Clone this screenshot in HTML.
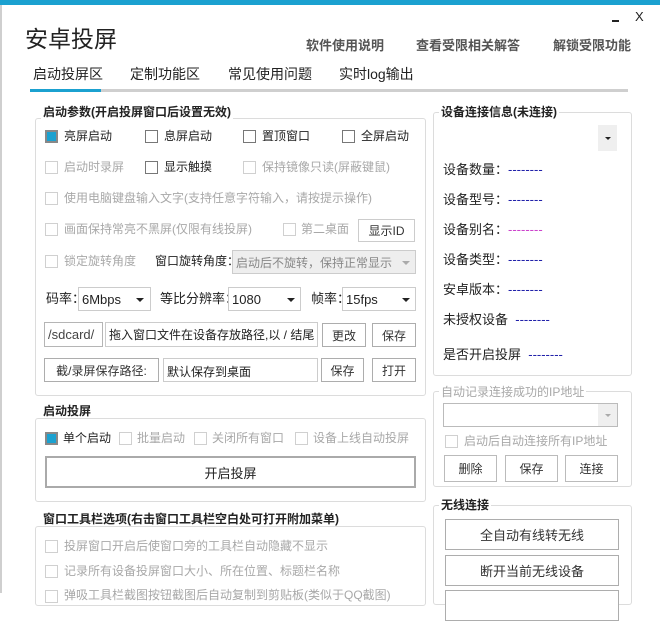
<!DOCTYPE html><html><head><meta charset="utf-8"><style>
*{margin:0;padding:0;box-sizing:border-box}
body{width:660px;height:593px;overflow:hidden;background:#fff;font-family:"Liberation Sans","Noto Sans CJK SC",sans-serif;font-size:12px;color:#222;position:relative}
.a{position:absolute;white-space:nowrap;line-height:1}
.g{position:absolute;border:1px solid #dcdcdc;border-radius:3px}
.gt{position:absolute;background:#fff;font-weight:bold;padding:0 2px;line-height:14px;font-size:12px}
.cb{position:absolute;width:13px;height:13px;border:1px solid #777;background:#fff}
.cb.d{border-color:#d0d0d0}
.cb.on{background:#1ba1d0;border:2px solid #888;}
.dis{color:#a8a8a8}
.btn{position:absolute;border:1px solid #adadad;background:#fff;display:flex;align-items:center;justify-content:center;font-size:12px;color:#333}
.inp{position:absolute;border:1px solid #b5b5b5;background:#fff;display:flex;align-items:center;padding-left:3px;font-size:12px}
.arr{position:absolute;width:0;height:0;border-left:4px solid transparent;border-right:4px solid transparent;border-top:4px solid #222}
.lab{position:absolute;font-size:13px;line-height:1;white-space:nowrap}
</style></head><body>
<div style="position:absolute;left:0;top:0;width:660px;height:5px;background:#1ba1d0"></div>
<div style="position:absolute;left:0;top:5px;width:2px;height:588px;background:#cfcfcf"></div>
<div class="a" style="left:25px;top:28px;font-size:23px;color:#222">安卓投屏</div>
<div class="a" style="left:306px;top:39px;font-size:13px;color:#555;font-weight:bold">软件使用说明</div>
<div class="a" style="left:416px;top:39px;font-size:13px;color:#555;font-weight:bold">查看受限相关解答</div>
<div class="a" style="left:553px;top:39px;font-size:13px;color:#555;font-weight:bold">解锁受限功能</div>
<div style="position:absolute;left:612px;top:20px;width:7px;height:2px;background:#222"></div>
<div class="a" style="left:635px;top:10px;font-size:13px">X</div>
<div class="a" style="left:33px;top:67px;font-size:14px">启动投屏区</div>
<div class="a" style="left:130px;top:67px;font-size:14px">定制功能区</div>
<div class="a" style="left:228px;top:67px;font-size:14px">常见使用问题</div>
<div class="a" style="left:339px;top:67px;font-size:14px">实时log输出</div>
<div style="position:absolute;left:30px;top:89px;width:598px;height:3px;background:#cfcfcf"></div>
<div style="position:absolute;left:30px;top:89px;width:71px;height:3px;background:#1ba1d0"></div>

<!-- group1 -->
<div class="g" style="left:35px;top:118px;width:391px;height:278px"></div>
<div class="gt" style="left:41px;top:105px">启动参数(开启投屏窗口后设置无效)</div>
<div class="cb on" style="left:45px;top:130px"></div><div class="a" style="left:64px;top:130px">亮屏启动</div>
<div class="cb" style="left:145px;top:130px"></div><div class="a" style="left:164px;top:130px">息屏启动</div>
<div class="cb" style="left:243px;top:130px"></div><div class="a" style="left:262px;top:130px">置顶窗口</div>
<div class="cb" style="left:342px;top:130px"></div><div class="a" style="left:361px;top:130px">全屏启动</div>
<div class="cb d" style="left:45px;top:161px"></div><div class="a dis" style="left:64px;top:161px">启动时录屏</div>
<div class="cb" style="left:145px;top:161px"></div><div class="a" style="left:164px;top:161px">显示触摸</div>
<div class="cb d" style="left:243px;top:161px"></div><div class="a dis" style="left:262px;top:161px">保持镜像只读(屏蔽键鼠)</div>
<div class="cb d" style="left:45px;top:192px"></div><div class="a dis" style="left:64px;top:192px">使用电脑键盘输入文字(支持任意字符输入，请按提示操作)</div>
<div class="cb d" style="left:45px;top:223px"></div><div class="a dis" style="left:64px;top:223px">画面保持常亮不黑屏(仅限有线投屏)</div>
<div class="cb d" style="left:283px;top:223px"></div><div class="a dis" style="left:301px;top:223px">第二桌面</div>
<div class="btn" style="left:358px;top:219px;width:57px;height:23px;border-color:#ccc">显示ID</div>
<div class="cb d" style="left:45px;top:255px"></div><div class="a dis" style="left:64px;top:255px">锁定旋转角度</div>
<div class="a" style="left:155px;top:255px">窗口旋转角度：</div>
<div class="inp dis" style="left:232px;top:250px;width:184px;height:24px;background:#eee;border-color:#ccc;color:#888">启动后不旋转，保持正常显示</div>
<div class="arr" style="left:402px;top:261px;border-top-color:#aaa"></div>
<div class="a" style="left:46px;top:292px;font-size:13px">码率：</div>
<div class="inp" style="left:78px;top:287px;width:73px;height:24px;border-color:#ccc;font-size:13px">6Mbps</div><div class="arr" style="left:136px;top:298px"></div>
<div class="a" style="left:160px;top:292px;font-size:13px">等比分辨率：</div>
<div class="inp" style="left:228px;top:287px;width:73px;height:24px;border-color:#ccc;font-size:13px">1080</div><div class="arr" style="left:287px;top:298px"></div>
<div class="a" style="left:311px;top:292px;font-size:13px">帧率：</div>
<div class="inp" style="left:342px;top:287px;width:74px;height:24px;border-color:#ccc;font-size:13px">15fps</div><div class="arr" style="left:402px;top:298px"></div>
<div class="inp" style="left:44px;top:322px;width:59px;height:25px;font-size:13px;color:#444">/sdcard/</div>
<div class="inp" style="left:105px;top:322px;width:213px;height:25px;border-color:#ccc;font-size:12px">拖入窗口文件在设备存放路径,以 / 结尾</div>
<div class="btn" style="left:322px;top:323px;width:44px;height:24px">更改</div>
<div class="btn" style="left:372px;top:323px;width:44px;height:24px">保存</div>
<div class="btn" style="left:44px;top:358px;width:115px;height:24px">截/录屏保存路径:</div>
<div class="inp" style="left:163px;top:358px;width:155px;height:24px;border-color:#ccc;align-items:flex-start;padding-top:4px">默认保存到桌面</div>
<div class="btn" style="left:321px;top:358px;width:43px;height:24px">保存</div>
<div class="btn" style="left:372px;top:358px;width:44px;height:24px">打开</div>

<!-- group2 -->
<div class="g" style="left:35px;top:418px;width:391px;height:84px"></div>
<div class="gt" style="left:41px;top:404px">启动投屏</div>
<div class="cb on" style="left:45px;top:432px"></div><div class="a" style="left:63px;top:432px">单个启动</div>
<div class="cb d" style="left:119px;top:432px"></div><div class="a dis" style="left:137px;top:432px">批量启动</div>
<div class="cb d" style="left:194px;top:432px"></div><div class="a dis" style="left:212px;top:432px">关闭所有窗口</div>
<div class="cb d" style="left:295px;top:432px"></div><div class="a dis" style="left:313px;top:432px">设备上线自动投屏</div>
<div class="btn" style="left:45px;top:456px;width:371px;height:32px;border:2px solid #aaa;font-size:13px;color:#222">开启投屏</div>

<!-- group3 -->
<div class="g" style="left:35px;top:526px;width:391px;height:80px"></div>
<div class="gt" style="left:41px;top:512px">窗口工具栏选项(右击窗口工具栏空白处可打开附加菜单)</div>
<div class="cb d" style="left:45px;top:540px"></div><div class="a dis" style="left:64px;top:540px">投屏窗口开启后使窗口旁的工具栏自动隐藏不显示</div>
<div class="cb d" style="left:45px;top:565px"></div><div class="a dis" style="left:64px;top:565px">记录所有设备投屏窗口大小、所在位置、标题栏名称</div>
<div class="cb d" style="left:45px;top:590px"></div><div class="a dis" style="left:64px;top:589px">弹吸工具栏截图按钮截图后自动复制到剪贴板(类似于QQ截图)</div>

<!-- right -->
<div class="g" style="left:433px;top:112px;width:199px;height:264px"></div>
<div class="gt" style="left:439px;top:105px">设备连接信息(未连接)</div>
<div style="position:absolute;left:598px;top:125px;width:19px;height:26px;background:#efefef"></div>
<div class="arr" style="left:605px;top:137px;border-left-width:3px;border-right-width:3px;border-top-width:3px"></div>
<div class="lab" style="left:443px;top:163px">设备数量：<span style="color:#2222aa">--------</span></div>
<div class="lab" style="left:443px;top:193px">设备型号：<span style="color:#2222aa">--------</span></div>
<div class="lab" style="left:443px;top:223px">设备别名：<span style="color:#cc44cc">--------</span></div>
<div class="lab" style="left:443px;top:253px">设备类型：<span style="color:#2222aa">--------</span></div>
<div class="lab" style="left:443px;top:283px">安卓版本：<span style="color:#2222aa">--------</span></div>
<div class="lab" style="left:443px;top:313px">未授权设备 &nbsp;<span style="color:#2222aa">--------</span></div>
<div class="lab" style="left:443px;top:348px">是否开启投屏 &nbsp;<span style="color:#2222aa">--------</span></div>

<div class="g" style="left:433px;top:391px;width:199px;height:96px"></div>
<div class="gt dis" style="left:439px;top:385px;font-weight:normal">自动记录连接成功的IP地址</div>
<div class="inp" style="left:443px;top:403px;width:175px;height:24px;border-color:#bbb"></div>
<div style="position:absolute;left:598px;top:404px;width:19px;height:22px;background:#efefef"></div>
<div class="arr" style="left:605px;top:414px;border-left-width:3px;border-right-width:3px;border-top-width:3px;border-top-color:#aaa"></div>
<div class="cb d" style="left:445px;top:435px"></div><div class="a dis" style="left:464px;top:435px">启动后自动连接所有IP地址</div>
<div class="btn" style="left:444px;top:455px;width:53px;height:27px;border-color:#bbb">删除</div>
<div class="btn" style="left:505px;top:455px;width:53px;height:27px;border-color:#bbb">保存</div>
<div class="btn" style="left:565px;top:455px;width:53px;height:27px;border-color:#bbb">连接</div>

<div class="g" style="left:433px;top:505px;width:199px;height:100px"></div>
<div class="gt" style="left:439px;top:498px">无线连接</div>
<div class="btn" style="left:445px;top:519px;width:174px;height:31px;font-size:13px">全自动有线转无线</div>
<div class="btn" style="left:445px;top:555px;width:174px;height:31px;font-size:13px">断开当前无线设备</div>
<div class="btn" style="left:445px;top:590px;width:174px;height:31px"></div>
</body></html>
